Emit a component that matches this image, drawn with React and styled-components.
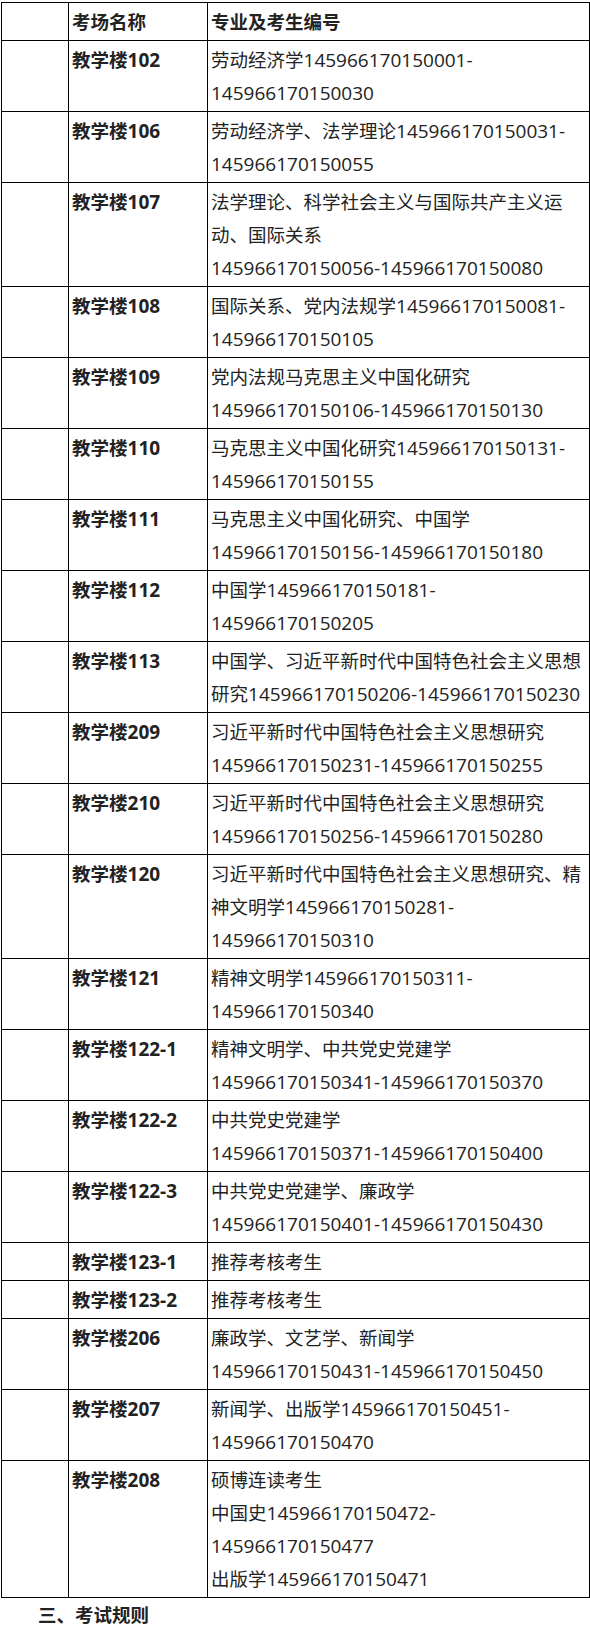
import styled, { createGlobalStyle } from 'styled-components';

const GlobalStyle = createGlobalStyle`
  body {
    margin: 0;
    background: #fff;
    font-family: "Open Sans", "Noto Sans CJK SC", sans-serif;
    color: #222;
  }
`;

const Page = styled.div`
  width: 590px;
  padding: 2px 0 0 1px;
  box-sizing: border-box;
`;

const Table = styled.table`
  width: 588px;
  border-collapse: collapse;
  table-layout: fixed;
  font-size: 18.5px;
  line-height: 33px;
`;

const Cell = styled.td`
  border: 1px solid #000;
  padding: 2px 3px;
  vertical-align: top;
  white-space: nowrap;
  font-weight: ${p => (p.$bold ? 700 : 400)};
`;

// digits run a little wider than the CJK text in the screenshot
const Num = styled.span`
  font-size: 19px;
  line-height: 1;
`;

const Heading = styled.div`
  font-size: 18.5px;
  line-height: 33px;
  font-weight: 700;
  padding-left: 37px;
`;

const rows = [
  ['教学楼102', ['劳动经济学145966170150001-', '145966170150030']],
  ['教学楼106', ['劳动经济学、法学理论145966170150031-', '145966170150055']],
  ['教学楼107', ['法学理论、科学社会主义与国际共产主义运', '动、国际关系', '145966170150056-145966170150080']],
  ['教学楼108', ['国际关系、党内法规学145966170150081-', '145966170150105']],
  ['教学楼109', ['党内法规马克思主义中国化研究', '145966170150106-145966170150130']],
  ['教学楼110', ['马克思主义中国化研究145966170150131-', '145966170150155']],
  ['教学楼111', ['马克思主义中国化研究、中国学', '145966170150156-145966170150180']],
  ['教学楼112', ['中国学145966170150181-', '145966170150205']],
  ['教学楼113', ['中国学、习近平新时代中国特色社会主义思想', '研究145966170150206-145966170150230']],
  ['教学楼209', ['习近平新时代中国特色社会主义思想研究', '145966170150231-145966170150255']],
  ['教学楼210', ['习近平新时代中国特色社会主义思想研究', '145966170150256-145966170150280']],
  ['教学楼120', ['习近平新时代中国特色社会主义思想研究、精', '神文明学145966170150281-', '145966170150310']],
  ['教学楼121', ['精神文明学145966170150311-', '145966170150340']],
  ['教学楼122-1', ['精神文明学、中共党史党建学', '145966170150341-145966170150370']],
  ['教学楼122-2', ['中共党史党建学', '145966170150371-145966170150400']],
  ['教学楼122-3', ['中共党史党建学、廉政学', '145966170150401-145966170150430']],
  ['教学楼123-1', ['推荐考核考生']],
  ['教学楼123-2', ['推荐考核考生']],
  ['教学楼206', ['廉政学、文艺学、新闻学', '145966170150431-145966170150450']],
  ['教学楼207', ['新闻学、出版学145966170150451-', '145966170150470']],
  ['教学楼208', ['硕博连读考生', '中国史145966170150472-', '145966170150477', '出版学145966170150471']],
];

const Text = ({ value }) =>
  value.split(/([0-9-]+)/).map((part, i) =>
    /^[0-9-]+$/.test(part) ? <Num key={i}>{part}</Num> : part
  );

const Lines = ({ lines }) =>
  lines.map((line, i) => (
    <span key={i}>
      <Text value={line} />
      {i < lines.length - 1 && <br />}
    </span>
  ));

const App = () => (
  <Page>
    <GlobalStyle />
    <Table>
      <colgroup>
        <col style={{ width: 67 }} />
        <col style={{ width: 139 }} />
        <col style={{ width: 382 }} />
      </colgroup>
      <tbody>
        <tr>
          <Cell />
          <Cell $bold>考场名称</Cell>
          <Cell $bold>专业及考生编号</Cell>
        </tr>
        {rows.map(([room, lines]) => (
          <tr key={room}>
            <Cell />
            <Cell $bold>
              <Text value={room} />
            </Cell>
            <Cell>
              <Lines lines={lines} />
            </Cell>
          </tr>
        ))}
      </tbody>
    </Table>
    <Heading>三、考试规则</Heading>
  </Page>
);

export default App;
